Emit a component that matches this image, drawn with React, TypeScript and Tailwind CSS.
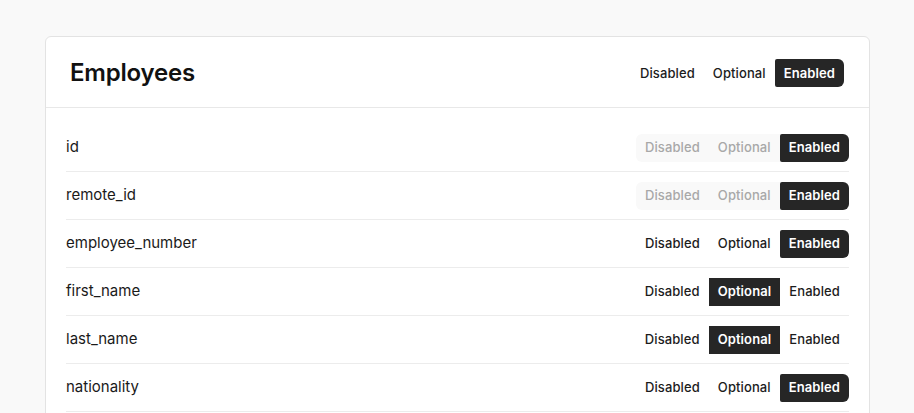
type Mode = "Disabled" | "Optional" | "Enabled";

const fields: { name: string; value: Mode; locked?: boolean }[] = [
  { name: "id", value: "Enabled", locked: true },
  { name: "remote_id", value: "Enabled", locked: true },
  { name: "employee_number", value: "Enabled" },
  { name: "first_name", value: "Optional" },
  { name: "last_name", value: "Optional" },
  { name: "nationality", value: "Enabled" },
];

const modes: Mode[] = ["Disabled", "Optional", "Enabled"];

function Segmented({ value, locked }: { value: Mode; locked?: boolean }) {
  return (
    <div className={`flex items-center rounded-md ${locked ? "bg-[#f9f9f9]" : "bg-white"}`}>
      {modes.map((m) => {
        const active = m === value;
        const shape =
          m === "Enabled" ? "rounded-l-[2px] rounded-r-md" : m === "Disabled" ? "rounded-l-md" : "rounded-none";
        return (
          <button
            key={m}
            className={`h-[28px] px-[9px] text-[13px] leading-none tracking-[0.1px] ${shape} ${
              active
                ? "bg-[#262626] text-white font-semibold"
                : locked
                ? "text-[#a8a8a8] font-medium"
                : "text-[#1c1c1c] font-medium"
            }`}
          >
            {m}
          </button>
        );
      })}
    </div>
  );
}

export default function App() {
  return (
    <main
      className="min-h-screen bg-[#f9f9f9] pt-[36px] pl-[45px] pr-[44px]"
      style={{ fontFamily: "Inter, 'Noto Sans', sans-serif" }}
    >
      <div className="w-[825px] bg-white border border-[#e3e3e3] rounded-md">
        {/* Header */}
        <div className="h-[71px] flex items-center justify-between pt-[2px] pl-[24px] pr-[25px] border-b border-[#e8e8e8]">
          <h1 className="text-[24px] font-semibold text-[#111] tracking-[-0.2px]">Employees</h1>
          <Segmented value="Enabled" />
        </div>

        {/* Fields */}
        <div className="pt-[16px] pb-[24px] px-[20px]">
          {fields.map((f) => (
            <div
              key={f.name}
              className="h-[48px] flex items-center justify-between border-b border-[#ececec]"
            >
              <span className="text-[15px] text-[#1a1a1a]">{f.name}</span>
              <Segmented value={f.value} locked={f.locked} />
            </div>
          ))}
        </div>
      </div>
    </main>
  );
}
